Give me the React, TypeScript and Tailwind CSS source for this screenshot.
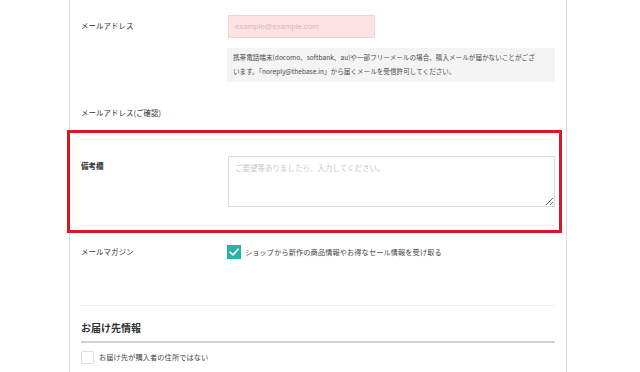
import React from "react";

const Label = ({ children, bold }: { children: React.ReactNode; bold?: boolean }) => (
  <div
    className={`w-[147px] shrink-0 text-[7.5px] leading-[12px] text-[#333] ${bold ? "font-bold" : ""}`}
  >
    {children}
  </div>
);

const CheckIcon = () => (
  <svg viewBox="0 0 14 14" className="w-[14px] h-[14px]">
    <polyline
      points="3.2,7.2 6,10 11,4.2"
      fill="none"
      stroke="#fff"
      strokeWidth="1.6"
      strokeLinecap="round"
      strokeLinejoin="round"
    />
  </svg>
);

export default function App() {
  return (
    <div className="relative w-[640px] h-[372px] overflow-hidden bg-white font-['Noto_Sans_CJK_JP',sans-serif]">
      <div className="ml-[69px] w-[498px] h-full border-x border-[#dcdcdc] px-[11px]">
        {/* email */}
        <div className="flex pt-[15px]">
          <div className="pt-[5px]">
            <Label>メールアドレス</Label>
          </div>
          <div className="w-[147px] h-[23px] bg-[#fde3e3] border border-[#f6cfcf] px-[6px] flex items-center text-[7.8px] text-[#e2b3b3] font-['Liberation_Sans',sans-serif]">
            example@example.com
          </div>
        </div>
        <div className="ml-[146px] mt-[10px] h-[34px] bg-[#f4f4f4] px-[6px] pt-[2px] text-[6.6px] leading-[14px] text-[#4a4a4a] whitespace-nowrap">
          携帯電話端末(docomo、softbank、au)や一部フリーメールの場合、購入メールが届かないことがござ
          <br />
          います。「noreply@thebase.in」から届くメールを受信許可してください。
        </div>

        {/* email confirm */}
        <div className="mt-[25px]">
          <Label>メールアドレス(ご確認)</Label>
        </div>

        {/* remarks */}
        <div className="mt-[20px] border-y border-[#efefef] pt-[16px] pb-[18px] flex">
          <div className="pt-[4px]">
            <Label bold>備考欄</Label>
          </div>
          <textarea
            className="flex-1 h-[51px] border border-[#dcdcdc] px-[6px] py-[5px] text-[7.5px] leading-[12px] text-[#333] placeholder:text-[#c8c8c8] outline-none"
            placeholder="ご要望等ありましたら、入力してください。"
          />
        </div>

        {/* mail magazine */}
        <div className="mt-[19px] flex items-center">
          <Label>メールマガジン</Label>
          <div className="w-[14px] h-[14px] bg-[#27b4a5] flex items-center justify-center -ml-[1px]">
            <CheckIcon />
          </div>
          <span className="ml-[4px] text-[7.2px] tracking-[0.1px] text-[#444]">
            ショップから新作の商品情報やお得なセール情報を受け取る
          </span>
        </div>

        {/* delivery */}
        <div className="mt-[46px] border-t border-[#efefef] pt-[15px]">
          <div className="pb-[6px] border-b-2 border-[#cfcfcf] text-[10px] leading-[14px] font-bold text-[#333]">
            お届け先情報
          </div>
          <div className="mt-[8px] flex items-center">
            <div className="w-[13px] h-[13px] border border-[#dedede] rounded-[1px]" />
            <span className="ml-[5px] text-[7.2px] tracking-[0.1px] text-[#444]">
              お届け先が購入者の住所ではない
            </span>
          </div>
        </div>
      </div>

      {/* highlight */}
      <div className="absolute left-[67px] top-[130px] w-[495px] h-[103px] border-[3px] border-[#d7191f]" />
    </div>
  );
}
